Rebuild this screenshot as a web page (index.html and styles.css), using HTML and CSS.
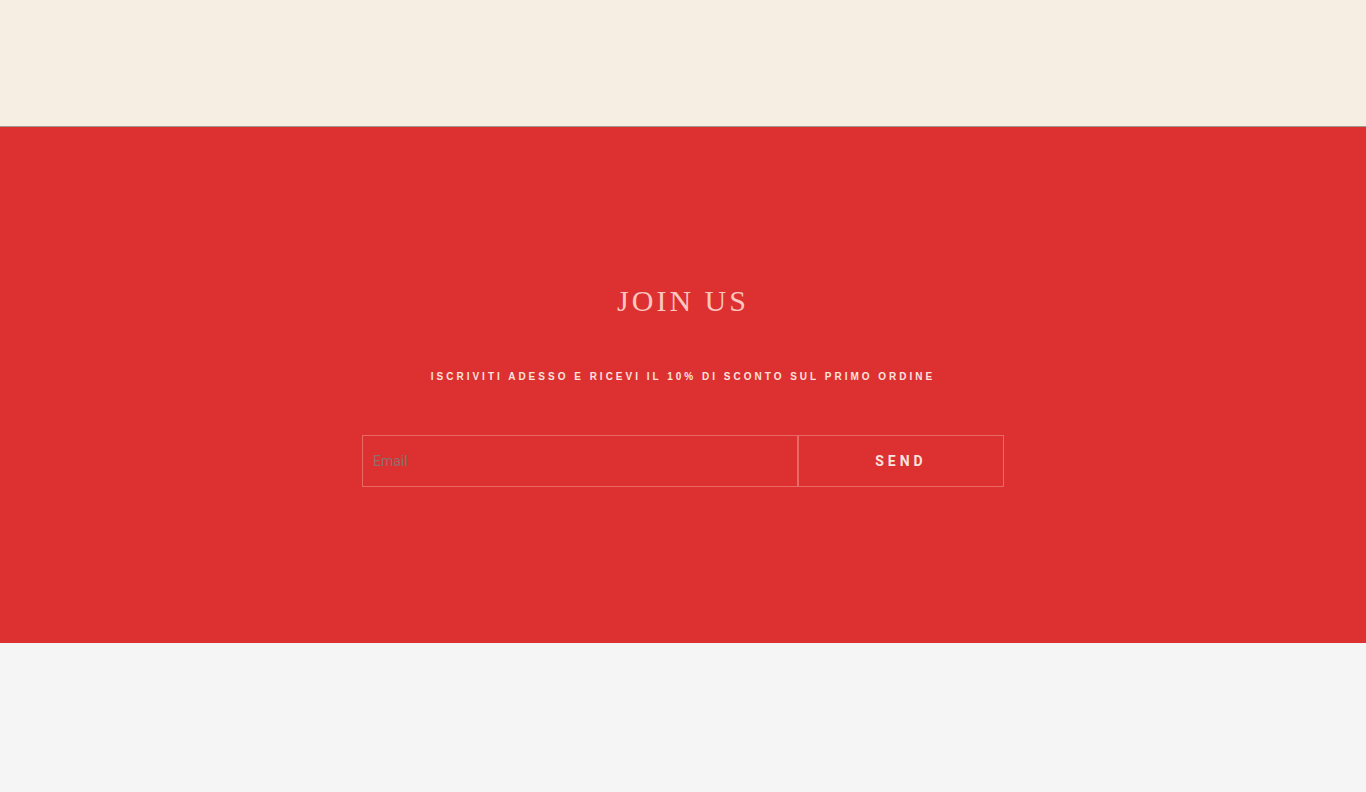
FILE: index.html
```html
<!DOCTYPE html>
<html lang="it">
<head>
<meta charset="utf-8">
<meta name="viewport" content="width=device-width, initial-scale=1">
<title>Join us</title>
<link rel="stylesheet" href="styles.css">
</head>
<body>
<div class="intro"></div>
<section class="newsletter">
  <h2 class="newsletter-title">JOIN US</h2>
  <p class="newsletter-text">ISCRIVITI ADESSO E RICEVI IL 10% DI SCONTO SUL PRIMO ORDINE</p>
  <form class="newsletter-form">
    <input class="newsletter-email" type="email" placeholder="Email" aria-label="Email">
    <button class="newsletter-send" type="submit">SEND</button>
  </form>
</section>
</body>
</html>
```

FILE: styles.css
```css
* {
  box-sizing: border-box;
}

body {
  margin: 0;
  background: #f5f5f5;
  font-family: "Liberation Sans", Arial, sans-serif;
}

.intro {
  height: 127px;
  background: #f6ede3;
  border-bottom: 1px solid #a09a90;
}

.newsletter {
  display: flex;
  flex-direction: column;
  align-items: center;
  padding: 156px 20px;
  background: #dd3030;
  text-align: center;
}

.newsletter-title {
  margin: 0;
  font-family: "Liberation Serif", "Times New Roman", serif;
  font-size: 30px;
  font-weight: 400;
  line-height: 36px;
  letter-spacing: 3px;
  color: #fbc6c0;
}

.newsletter-text {
  margin: 50px 0;
  font-size: 10px;
  font-weight: 700;
  line-height: 16px;
  letter-spacing: 3px;
  color: #fbe3df;
}

.newsletter-form {
  display: flex;
  width: 100%;
  max-width: 642px;
  height: 52px;
}

.newsletter-email,
.newsletter-send {
  margin: 0;
  border: 1px solid #ea6965;
  border-radius: 0;
  background: transparent;
}

.newsletter-email {
  flex: 1;
  min-width: 0;
  padding: 0 10px;
  font-family: Roboto, sans-serif;
  font-size: 14px;
  color: #fbe3df;
}

.newsletter-email::placeholder {
  color: #8c716d;
  opacity: 1;
}

.newsletter-send {
  width: 206px;
  font-family: Roboto, sans-serif;
  font-size: 14px;
  font-weight: 700;
  letter-spacing: 4px;
  color: #fbe3df;
}
```
